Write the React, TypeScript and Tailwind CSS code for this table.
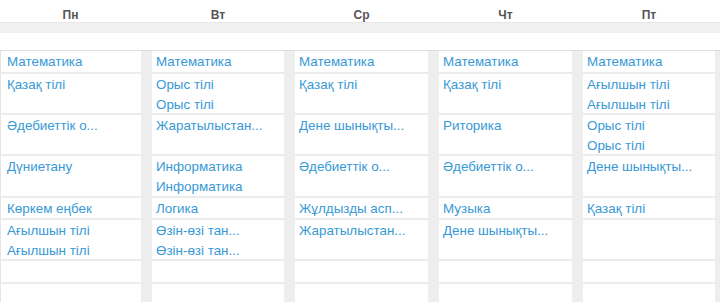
const days = ['Пн', 'Вт', 'Ср', 'Чт', 'Пт'];

// lessons[row][day] -> list of lines in the cell
const lessons: string[][][] = [
  [['Математика'], ['Математика'], ['Математика'], ['Математика'], ['Математика']],
  [['Қазақ тілі'], ['Орыс тілі', 'Орыс тілі'], ['Қазақ тілі'], ['Қазақ тілі'], ['Ағылшын тілі', 'Ағылшын тілі']],
  [['Әдебиеттік о...'], ['Жаратылыстан...'], ['Дене шынықты...'], ['Риторика'], ['Орыс тілі', 'Орыс тілі']],
  [['Дүниетану'], ['Информатика', 'Информатика'], ['Әдебиеттік о...'], ['Әдебиеттік о...'], ['Дене шынықты...']],
  [['Көркем еңбек'], ['Логика'], ['Жұлдызды асп...'], ['Музыка'], ['Қазақ тілі']],
  [['Ағылшын тілі', 'Ағылшын тілі'], ['Өзін-өзі тан...', 'Өзін-өзі тан...'], ['Жаратылыстан...'], ['Дене шынықты...'], []],
  [[], [], [], [], []],
  [[], [], [], [], []],
];

const rowHeights = ['h-[23px]', 'h-[41px]', 'h-[41px]', 'h-[42px]', 'h-[22px]', 'h-[41px]', 'h-[23px]', 'h-[23px]'];

const cols = 'grid grid-cols-[141px_132px_133px_133px_132px] gap-x-[11px]';

export default function App() {
  return (
    <div className="w-[720px] h-[302px] overflow-hidden bg-white font-['Liberation_Sans',Arial,sans-serif]">
      <div className={`${cols} h-[22px] items-center`}>
        {days.map((d) => (
          <div key={d} className="text-center text-[12px] font-bold text-[#555] pt-[8px] leading-[14px]">
            {d}
          </div>
        ))}
      </div>
      <div className="h-[11px] bg-[#f0f0f0] border-t border-[#e8e8e8]" />
      <div className="h-[17px]" />
      <div className={`${cols} gap-y-0 bg-[#eeeeee] border-t border-[#dddddd]`}>
        {lessons.map((row, r) =>
          row.map((cell, c) => (
            <div
              key={`${r}-${c}`}
              className={`${rowHeights[r]} bg-white border-b-2 border-[#ececec] pt-px text-[13.4px] leading-[20px] text-[#3899d6] ${
                c === 0 ? 'pl-[6px] border-l border-l-[#e4e4e4]' : 'pl-[4px]'
              }`}
            >
              {cell.map((l, i) => (
                <div key={i} className="whitespace-nowrap">
                  {l}
                </div>
              ))}
            </div>
          ))
        )}
      </div>
    </div>
  );
}
